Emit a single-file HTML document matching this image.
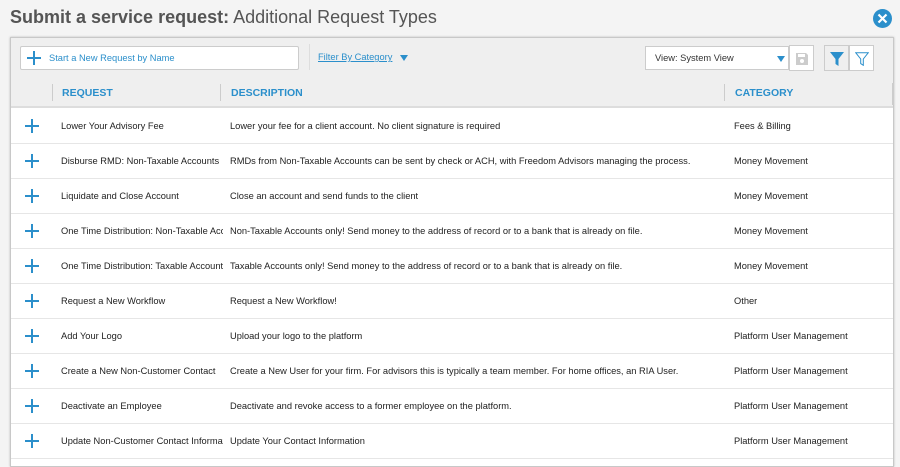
<!DOCTYPE html>
<html><head><style>
*{margin:0;padding:0;box-sizing:border-box}
body{width:900px;height:455px;background:#f4f4f4;font-family:"Liberation Sans",sans-serif;position:relative;overflow:hidden;color:#333}
.a{position:absolute}
h1{position:absolute;left:10px;top:7px;font-size:18px;font-weight:normal;color:#555;white-space:nowrap}
h1 b{font-weight:bold;color:#555}
.panel{position:absolute;left:10px;top:37px;width:884px;height:430px;background:#fff;border:1px solid #c8c8c8;box-shadow:0 0 2px #bbb}
.tool{position:absolute;left:0;top:0;width:100%;height:39px;background:#efefef}
.head{position:absolute;left:0;top:39px;width:100%;height:31px;background:#efefef;border-bottom:2px solid #ddd}
.hd{position:absolute;top:49px;font-size:10.5px;font-weight:bold;color:#2b8fcb}
.sep{position:absolute;top:7px;width:1px;height:17px;background:#ccc}
.row{position:absolute;left:0;width:100%;height:35px;border-bottom:1px solid #e6e6e6;font-size:9.3px;color:#222}
.row span{position:absolute;top:12px;white-space:nowrap;overflow:hidden}
.plus{position:absolute;left:14px;top:10px;width:14px;height:14px}
.plus:before{content:"";position:absolute;left:6px;top:0;width:2px;height:14px;background:#2b8fcb}
.plus:after{content:"";position:absolute;left:0;top:6px;width:14px;height:2px;background:#2b8fcb}
</style></head><body>
<h1><b>Submit a service request:</b> Additional Request Types</h1>
<svg class="a" style="left:873px;top:9px" width="19" height="19" viewBox="0 0 19 19"><circle cx="9.5" cy="9.5" r="9.5" fill="#2b8fcb"/><path d="M5.5 5.5L13.5 13.5M13.5 5.5L5.5 13.5" stroke="#fff" stroke-width="2.2"/></svg>
<div class="panel">
 <div class="tool">
  <div class="a" style="left:9px;top:8px;width:279px;height:24px;background:#fff;border:1px solid #ccc;border-radius:2px">
   <div class="plus" style="left:6px;top:4px"></div>
   <span class="a" style="left:28px;top:6px;font-size:9.3px;color:#2b8fcb">Start a New Request by Name</span>
  </div>
  <div class="a" style="left:298px;top:6px;width:1px;height:26px;background:#ddd"></div>
  <span class="a" style="left:307px;top:14px;font-size:9.3px;color:#2b8fcb;text-decoration:underline">Filter By Category</span>
  <svg class="a" style="left:389px;top:17px" width="8" height="6"><path d="M0 0H8L4 6Z" fill="#2b8fcb"/></svg>
  <div class="a" style="left:634px;top:8px;width:144px;height:24px;background:#fff;border:1px solid #ccc">
   <span class="a" style="left:9px;top:6px;font-size:9.3px;color:#333">View: System View</span>
   <svg class="a" style="left:131px;top:9px" width="8" height="6"><path d="M0 0H8L4 6Z" fill="#2b8fcb"/></svg>
  </div>
  <div class="a" style="left:778px;top:7px;width:25px;height:26px;background:#fff;border:1px solid #ccc">
   <svg class="a" style="left:5px;top:6px" width="14" height="14"><path d="M1 1H11L13 3V13H1Z" fill="#ccc"/><rect x="3" y="2" width="7" height="3" fill="#fff"/><circle cx="7" cy="9" r="2" fill="#fff"/></svg>
  </div>
  <div class="a" style="left:813px;top:7px;width:25px;height:26px;background:#efefef;border:1px solid #ccc">
   <svg class="a" style="left:5px;top:6px" width="14" height="14"><path d="M0 0H14L8.5 7V14L5.5 12V7Z" fill="#2b8fcb"/></svg>
  </div>
  <div class="a" style="left:838px;top:7px;width:25px;height:26px;background:#fff;border:1px solid #ccc">
   <svg class="a" style="left:5px;top:6px" width="14" height="14"><path d="M0.7 0.7H13.3L8.3 7V13.3L5.7 11.6V7Z" fill="none" stroke="#2b8fcb" stroke-width="1"/></svg>
  </div>
 </div>
 <div class="head">
  <div class="sep" style="left:41px"></div>
  <div class="sep" style="left:209px"></div>
  <div class="sep" style="left:713px"></div>
  <div class="a" style="left:881px;top:6px;width:2px;height:22px;background:#ccc"></div>
 </div>
 <span class="hd" style="left:51px">REQUEST</span>
 <span class="hd" style="left:220px">DESCRIPTION</span>
 <span class="hd" style="left:724px">CATEGORY</span>

 <div class="row" style="top:71px"><div class="plus"></div><span style="left:50px;width:162px">Lower Your Advisory Fee</span><span style="left:219px">Lower your fee for a client account. No client signature is required</span><span style="left:723px">Fees &amp; Billing</span></div>
 <div class="row" style="top:106px"><div class="plus"></div><span style="left:50px;width:162px">Disburse RMD: Non-Taxable Accounts</span><span style="left:219px">RMDs from Non-Taxable Accounts can be sent by check or ACH, with Freedom Advisors managing the process.</span><span style="left:723px">Money Movement</span></div>
 <div class="row" style="top:141px"><div class="plus"></div><span style="left:50px;width:162px">Liquidate and Close Account</span><span style="left:219px">Close an account and send funds to the client</span><span style="left:723px">Money Movement</span></div>
 <div class="row" style="top:176px"><div class="plus"></div><span style="left:50px;width:162px">One Time Distribution: Non-Taxable Accounts</span><span style="left:219px">Non-Taxable Accounts only! Send money to the address of record or to a bank that is already on file.</span><span style="left:723px">Money Movement</span></div>
 <div class="row" style="top:211px"><div class="plus"></div><span style="left:50px;width:162px">One Time Distribution: Taxable Accounts</span><span style="left:219px">Taxable Accounts only! Send money to the address of record or to a bank that is already on file.</span><span style="left:723px">Money Movement</span></div>
 <div class="row" style="top:246px"><div class="plus"></div><span style="left:50px;width:162px">Request a New Workflow</span><span style="left:219px">Request a New Workflow!</span><span style="left:723px">Other</span></div>
 <div class="row" style="top:281px"><div class="plus"></div><span style="left:50px;width:162px">Add Your Logo</span><span style="left:219px">Upload your logo to the platform</span><span style="left:723px">Platform User Management</span></div>
 <div class="row" style="top:316px"><div class="plus"></div><span style="left:50px;width:162px">Create a New Non-Customer Contact</span><span style="left:219px">Create a New User for your firm. For advisors this is typically a team member. For home offices, an RIA User.</span><span style="left:723px">Platform User Management</span></div>
 <div class="row" style="top:351px"><div class="plus"></div><span style="left:50px;width:162px">Deactivate an Employee</span><span style="left:219px">Deactivate and revoke access to a former employee on the platform.</span><span style="left:723px">Platform User Management</span></div>
 <div class="row" style="top:386px"><div class="plus"></div><span style="left:50px;width:162px">Update Non-Customer Contact Information</span><span style="left:219px">Update Your Contact Information</span><span style="left:723px">Platform User Management</span></div>
</div>
</body></html>
